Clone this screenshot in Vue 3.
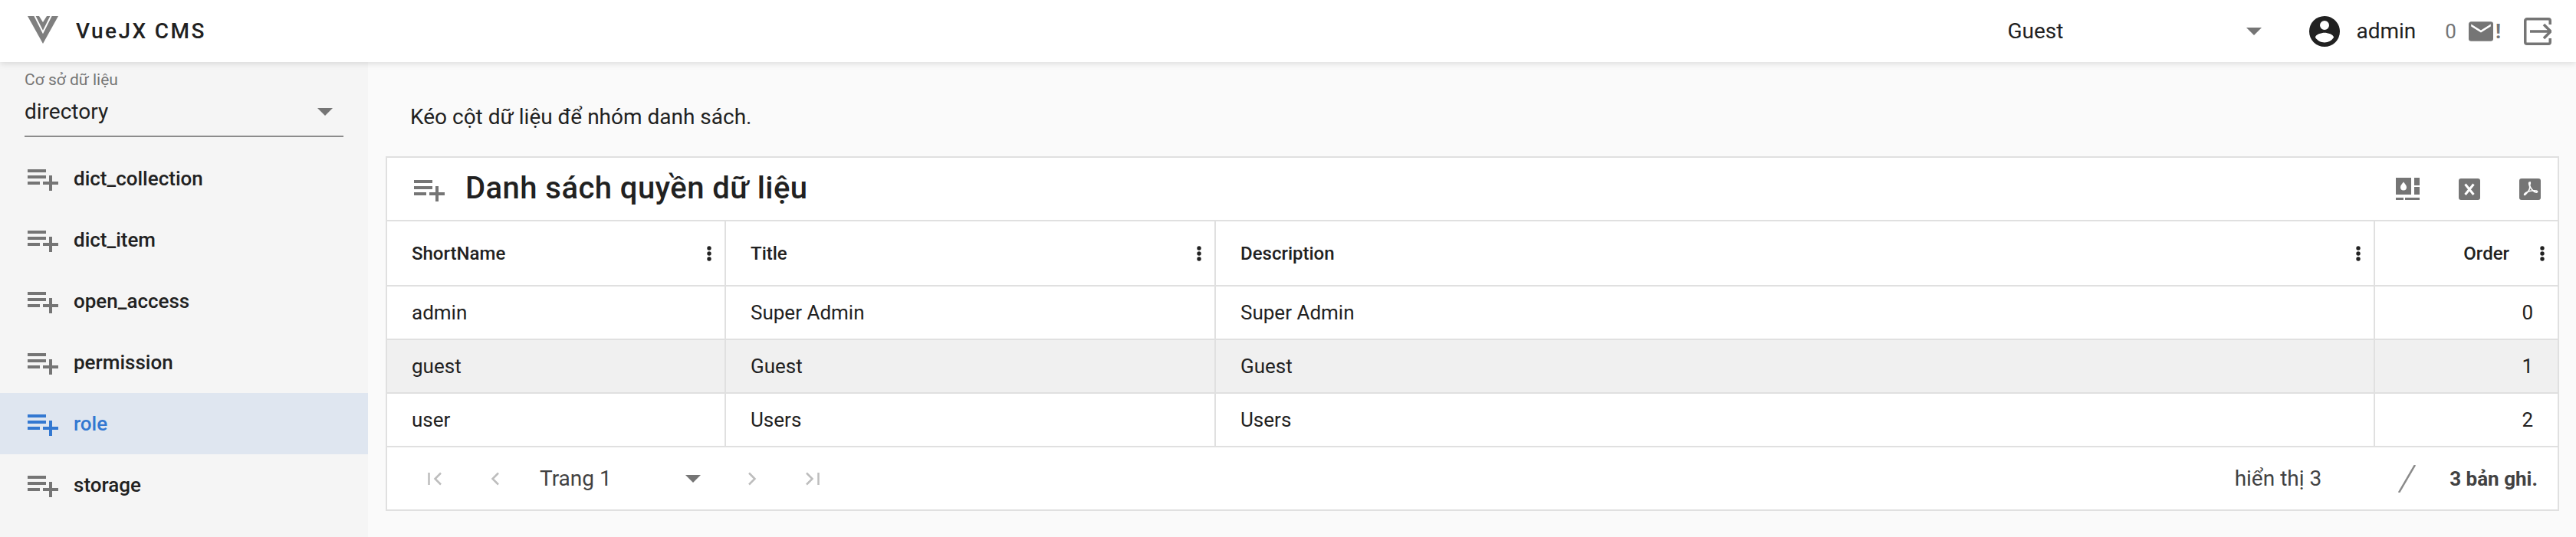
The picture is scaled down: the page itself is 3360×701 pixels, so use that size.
<template>
  <div class="page">
    <header class="topbar">
      <svg class="logo" viewBox="0 0 40 36" width="40" height="36">
        <path fill="#7f7f7f" d="M0 0h40L20 36z" />
        <path fill="none" stroke="#fff" stroke-width="2" d="M9 -1L20 21 31 -1" />
        <path fill="#fff" d="M15 0h10l-5 8z" />
      </svg>
      <span class="brand">VueJX CMS</span>
      <div class="spacer"></div>
      <div class="role-select">
        <span>Guest</span>
        <i class="caret"></i>
      </div>
      <svg class="account" viewBox="0 0 24 24" width="48" height="48">
        <path fill="#212121" d="M12 19.200c-2.500 0-4.710-1.280-6-3.200.03-2 4-3.100 6-3.100s5.970 1.100 6 3.100a7.232 7.232 0 0 1-6 3.200M12 5a3 3 0 0 1 3 3 3 3 0 0 1-3 3 3 3 0 0 1-3-3 3 3 0 0 1 3-3m0-3A10 10 0 0 0 2 12a10 10 0 0 0 10 10 10 10 0 0 0 10-10C22 6.470 17.500 2 12 2z" />
      </svg>
      <span class="user">admin</span>
      <span class="count">0</span>
      <svg class="mail" viewBox="2 4 20 16" width="32" height="26">
        <path fill="#757575" d="M20 8l-8 5-8-5V6l8 5 8-5m0-2H4c-1.110 0-2 .89-2 2v12a2 2 0 0 0 2 2h16a2 2 0 0 0 2-2V6a2 2 0 0 0-2-2z" />
      </svg>
      <span class="bang">!</span>
      <svg class="logout" viewBox="0 0 36 36" width="36" height="36">
        <path fill="none" stroke="#757575" stroke-width="3.500" d="M34.250 9V4A2.250 2.250 0 0 0 32 1.750H4A2.250 2.250 0 0 0 1.750 4v28A2.250 2.250 0 0 0 4 34.250h28a2.250 2.250 0 0 0 2.250-2.250v-5" />
        <path fill="none" stroke="#757575" stroke-width="3.500" d="M8 18h27M26 9l9 9-9 9" />
      </svg>
    </header>

    <div class="body">
      <aside class="sidebar">
        <div class="db-field">
          <div class="db-label">Cơ sở dữ liệu</div>
          <div class="db-value">
            <span>directory</span>
            <i class="caret"></i>
          </div>
        </div>
        <ul class="nav">
          <li v-for="item in collections" :key="item" :class="{ active: item === selected }">
            <svg viewBox="0 0 24 24" width="48" height="48">
              <path :d="playlistAdd" fill="currentColor" />
            </svg>
            <span>{{ item }}</span>
          </li>
        </ul>
      </aside>

      <main class="content">
        <p class="hint">Kéo cột dữ liệu để nhóm danh sách.</p>
        <section class="card">
          <div class="card-head">
            <svg viewBox="0 0 24 24" width="48" height="48">
              <path :d="playlistAdd" fill="#757575" />
            </svg>
            <h2>Danh sách quyền dữ liệu</h2>
            <div class="tools">
              <svg viewBox="0 0 31 29" width="31" height="29">
                <path fill="#757575" d="M0 0h20v22H0zM24 0h7v10h-7zM24 12h7v10h-7zM0 26h10v3H0zM12 26h19v3H12z" />
                <path fill="#fff" d="M10 5.500c2.300 2.800 4 4.800 4 7a4 4 0 0 1-8 0c0-2.200 1.700-4.200 4-7z" />
              </svg>
              <svg viewBox="0 0 28 28" width="28" height="28">
                <rect width="28" height="28" rx="3" fill="#757575" />
                <path fill="none" stroke="#fff" stroke-width="3" d="M8.500 7.500l11 13.500M19.500 7.500l-11 13.500" />
              </svg>
              <svg viewBox="0 0 28 28" width="28" height="28">
                <rect width="28" height="28" rx="3" fill="#757575" />
                <path fill="none" stroke="#fff" stroke-width="1.600" d="M13.500 5c-1.200 0-1 2.500 0 5 1 3-2 7.500-5 10.500-2 2-3 .5-.5-1.500 3-2.200 10-4 14-3 2.500.6 2 2.500-.5 2-3-.7-6.500-5-7.500-8-.6-2 .6-5 1-5z" />
              </svg>
            </div>
          </div>

          <table class="grid">
            <colgroup>
              <col v-for="col in columns" :key="col.key" :style="{ width: col.width + 'px' }" />
            </colgroup>
            <thead>
              <tr>
                <th v-for="col in columns" :key="col.key" :class="{ num: col.num }">
                  <div class="th-inner">
                    <span class="th-label">{{ col.key }}</span>
                    <svg class="kebab" viewBox="0 0 6 20" width="6" height="20">
                      <circle cx="3" cy="3" r="2.700" fill="#212121" />
                      <circle cx="3" cy="10" r="2.700" fill="#212121" />
                      <circle cx="3" cy="17" r="2.700" fill="#212121" />
                    </svg>
                  </div>
                </th>
              </tr>
            </thead>
            <tbody>
              <tr v-for="(row, i) in rows" :key="row.ShortName" :class="{ odd: i === 1 }">
                <td v-for="col in columns" :key="col.key" :class="{ num: col.num }">{{ row[col.key] }}</td>
              </tr>
            </tbody>
          </table>

          <div class="pager">
            <svg class="pg first" viewBox="0 0 18 18" width="18" height="18">
              <path fill="none" stroke="#bdbdbd" stroke-width="2.500" d="M1.500 1v16M17 1.500L9.500 9l7.500 7.500" />
            </svg>
            <svg class="pg prev" viewBox="0 0 11 18" width="11" height="18">
              <path fill="none" stroke="#bdbdbd" stroke-width="2.500" d="M10 1.500L2.500 9l7.500 7.500" />
            </svg>
            <div class="page-select">
              <span>Trang 1</span>
              <i class="caret"></i>
            </div>
            <svg class="pg next" viewBox="0 0 11 18" width="11" height="18">
              <path fill="none" stroke="#bdbdbd" stroke-width="2.500" d="M1 1.500L8.500 9 1 16.500" />
            </svg>
            <svg class="pg last" viewBox="0 0 18 18" width="18" height="18">
              <path fill="none" stroke="#bdbdbd" stroke-width="2.500" d="M16.500 1v16M1 1.500L8.500 9 1 16.500" />
            </svg>
            <div class="spacer"></div>
            <span class="shown">hiển thị 3</span>
            <svg class="slash" viewBox="0 0 23 36" width="23" height="36">
              <path stroke="#8a8a8a" stroke-width="2.500" d="M22 0L1 36" />
            </svg>
            <span class="total">3 bản ghi.</span>
          </div>
        </section>
      </main>
    </div>
  </div>
</template>

<script setup>
const playlistAdd = 'M14 10H2v2h12v-2zm0-4H2v2h12V6zm4 8v-4h-2v4h-4v2h4v4h2v-4h4v-2h-4zM2 16h8v-2H2v2z'

const selected = 'role'
const collections = ['dict_collection', 'dict_item', 'open_access', 'permission', 'role', 'storage']

const columns = [
  { key: 'ShortName', width: 442 },
  { key: 'Title', width: 639 },
  { key: 'Description', width: 1512 },
  { key: 'Order', width: 238, num: true }
]

const rows = [
  { ShortName: 'admin', Title: 'Super Admin', Description: 'Super Admin', Order: 0 },
  { ShortName: 'guest', Title: 'Guest', Description: 'Guest', Order: 1 },
  { ShortName: 'user', Title: 'Users', Description: 'Users', Order: 2 }
]
</script>

<style>
html,
body {
  margin: 0;
  background: #fafafa;
}
</style>

<style scoped>
.page {
  height: 701px;
  display: flex;
  flex-direction: column;
  overflow: hidden;
  font-family: Roboto, "Noto Sans", sans-serif;
  color: #212121;
}

.topbar {
  height: 81px;
  flex: none;
  display: flex;
  align-items: center;
  padding-left: 36px;
  background: #fff;
  box-shadow: 0 2px 8px rgba(0, 0, 0, 0.12);
  position: relative;
  z-index: 2;
}

.logo {
  margin-top: -3px;
}

.brand {
  margin-left: 23px;
  font-size: 28px;
  font-weight: 500;
  letter-spacing: 2.400px;
}

.spacer {
  flex: 1;
}

.role-select {
  width: 332px;
  display: flex;
  align-items: center;
  justify-content: space-between;
  font-size: 28px;
  margin-right: 58px;
}

.caret {
  display: block;
  width: 0;
  height: 0;
  border-left: 10px solid transparent;
  border-right: 10px solid transparent;
  border-top: 10px solid #757575;
}

.account {
  margin-right: 17px;
}

.user {
  font-size: 28px;
}

.count {
  margin-left: 38px;
  font-size: 26px;
  color: #757575;
}

.mail {
  margin-left: 16px;
}

.bang {
  margin-left: 3px;
  margin-right: 30px;
  font-size: 26px;
  font-weight: 700;
  color: #757575;
}

.logout {
  margin-right: 32px;
}

.body {
  flex: 1;
  display: flex;
  min-height: 0;
}

.sidebar {
  width: 480px;
  flex: none;
  background: #f5f5f5;
}

.db-field {
  margin: 8px 32px 0;
  height: 88px;
  border-bottom: 2px solid #8c8c8c;
}

.db-label {
  font-size: 21px;
  line-height: 30px;
  color: #757575;
}

.db-value {
  display: flex;
  align-items: center;
  justify-content: space-between;
  font-size: 28px;
  line-height: 54px;
  padding-right: 14px;
}

.nav {
  list-style: none;
  margin: 14px 0 0;
  padding: 0;
}

.nav li {
  height: 80px;
  display: flex;
  align-items: center;
  padding-left: 32px;
  color: #757575;
}

.nav li span {
  margin-left: 16px;
  font-size: 26px;
  font-weight: 500;
  color: #212121;
}

.nav li.active {
  background: #dfe6f0;
  color: #3378d1;
}

.nav li.active span {
  color: #3378d1;
}

.content {
  flex: 1;
  min-width: 0;
  padding-left: 23px;
  background: #fafafa;
}

.hint {
  margin: 52px 0 31px 32px;
  font-size: 28px;
  line-height: 40px;
}

.card {
  border: 2px solid #e0e0e0;
  background: #fff;
  width: 2835px;
  box-sizing: border-box;
}

.card-head {
  height: 83px;
  box-sizing: border-box;
  display: flex;
  align-items: center;
  padding-left: 31px;
  border-bottom: 2px solid #e0e0e0;
}

.card-head h2 {
  margin: -2px 0 0 23px;
  font-size: 40px;
  font-weight: 500;
  letter-spacing: 0.450px;
}

.tools {
  margin-left: auto;
  margin-right: 22px;
  display: flex;
  align-items: center;
  gap: 51px;
}

.grid {
  table-layout: fixed;
  width: 2831px;
  border-collapse: separate;
  border-spacing: 0;
}

.grid th,
.grid td {
  box-sizing: border-box;
  padding: 0 32px;
  border-right: 2px solid #e0e0e0;
  border-bottom: 2px solid #e0e0e0;
  text-align: left;
}

.grid th:last-child,
.grid td:last-child {
  border-right: 0;
}

.grid th {
  height: 85px;
  padding-right: 17px;
  font-size: 24px;
  font-weight: 500;
}

.grid td {
  height: 70px;
  font-size: 26px;
}

.th-inner {
  display: flex;
  align-items: center;
}

.th-label {
  flex: 1;
}

th.num .th-label {
  text-align: right;
  margin-right: 40px;
}

.grid td.num {
  text-align: right;
  padding-right: 32px;
}

.grid tr.odd td {
  background: #f0f0f0;
}

.pager {
  height: 81px;
  display: flex;
  align-items: center;
  padding-left: 53px;
  color: #424242;
  font-size: 28px;
}

.pg.prev {
  margin-left: 64px;
}

.page-select {
  width: 210px;
  margin-left: 53px;
  margin-right: 62px;
  display: flex;
  align-items: center;
  justify-content: space-between;
}

.pg.last {
  margin-left: 64px;
}

.shown {
  font-size: 28px;
}

.slash {
  margin-left: 100px;
}

.total {
  margin-left: 44px;
  margin-right: 26px;
  font-size: 26px;
  font-weight: 700;
}
</style>
